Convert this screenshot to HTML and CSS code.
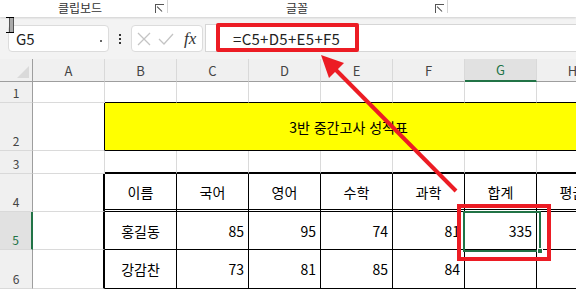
FILE: index.html
```html
<!DOCTYPE html>
<html lang="ko">

<head>
    <meta charset="UTF-8">
    <meta name="viewport" content="width=device-width, initial-scale=1.0">
    <title>성적표</title>
    <link rel="stylesheet" href="styles.css">
</head>

<body>
    <div id="app">
        <!-- 리본 그룹 이름 -->
        <div class="ribbon">
            <div class="group g-clip">
                <span class="label">클립보드</span>
                <i class="launch"></i>
            </div>
            <div class="group g-font">
                <span class="label">글꼴</span>
                <i class="launch"></i>
            </div>
        </div>

        <!-- 수식 입력줄 -->
        <div class="fbar">
            <div class="namebox">
                <span>G5</span>
                <i class="dot"></i>
            </div>
            <div class="vdots"><i></i><i></i><i></i></div>
            <div class="fxbox">
                <svg width="16" height="16" viewBox="0 0 16 16"><path d="M2 2 L14 14 M14 2 L2 14" stroke="#c4c4c4" stroke-width="1.3" fill="none"/></svg>
                <svg width="18" height="16" viewBox="0 0 18 16"><path d="M2 8 L7 13 L16 3" stroke="#c4c4c4" stroke-width="1.3" fill="none"/></svg>
                <span class="fx">fx</span>
            </div>
            <div class="finput">
                <span class="formula">=C5+D5+E5+F5</span>
            </div>
        </div>

        <!-- 시트 -->
        <div class="sheet">
            <div class="hd corner"></div>
            <div class="hd col">A</div>
            <div class="hd col">B</div>
            <div class="hd col">C</div>
            <div class="hd col">D</div>
            <div class="hd col">E</div>
            <div class="hd col">F</div>
            <div class="hd col on">G</div>
            <div class="hd col">H</div>

            <div class="hd row">1</div>
            <div class="c"></div>
            <div class="c b-bot"></div>
            <div class="c b-bot"></div>
            <div class="c b-bot"></div>
            <div class="c b-bot"></div>
            <div class="c b-bot"></div>
            <div class="c b-bot"></div>
            <div class="c b-bot"></div>

            <div class="hd row">2</div>
            <div class="c b-right"></div>
            <div class="c title">3반 중간고사 성적표</div>

            <div class="hd row">3</div>
            <div class="c"></div>
            <div class="c top"></div>
            <div class="c top"></div>
            <div class="c top"></div>
            <div class="c top"></div>
            <div class="c top"></div>
            <div class="c top"></div>
            <div class="c top"></div>

            <div class="hd row">4</div>
            <div class="c edge"></div>
            <div class="c t th">이름</div>
            <div class="c t th">국어</div>
            <div class="c t th">영어</div>
            <div class="c t th">수학</div>
            <div class="c t th">과학</div>
            <div class="c t th">합계</div>
            <div class="c t th">평균</div>

            <div class="hd row on">5</div>
            <div class="c edge"></div>
            <div class="c t mid">홍길동</div>
            <div class="c t num">85</div>
            <div class="c t num">95</div>
            <div class="c t num">74</div>
            <div class="c t num">81</div>
            <div class="c t num">335</div>
            <div class="c t"></div>

            <div class="hd row">6</div>
            <div class="c edge"></div>
            <div class="c t mid">강감찬</div>
            <div class="c t num">73</div>
            <div class="c t num">81</div>
            <div class="c t num">85</div>
            <div class="c t num">84</div>
            <div class="c t"></div>
            <div class="c t"></div>
        </div>

        <!-- 표시 (위에 겹치는 것) -->
        <i class="ibeam"></i>
        <div class="mark mark-formula"></div>
        <div class="mark mark-cell"></div>
        <div class="sel"><i></i></div>
        <svg class="arrow" width="576" height="289" viewBox="0 0 576 289">
            <line x1="456" y1="191" x2="334" y2="68" stroke="#ec1c24" stroke-width="4"/>
            <polygon points="321,55 344,63 329,78" fill="#ec1c24"/>
        </svg>
    </div>
</body>

</html>
```

FILE: styles.css
```css
* {
    padding: 0;
    margin: 0;
    box-sizing: border-box;
}

body {
    width: 576px;
    height: 289px;
    overflow: hidden;
    background-color: #f3f3f3;
    font-family: "Noto Sans CJK KR", "Noto Sans", sans-serif;
    color: #000;
}

#app {
    position: relative;
    width: 576px;
    height: 289px;
    overflow: hidden;
}

/* 리본 */
.ribbon {
    height: 17px;
    background-color: #fff;
    display: flex;
    box-shadow: 0 1px 2px rgba(0, 0, 0, 0.15);
    position: relative;
}

.ribbon .group {
    height: 13px;
    display: flex;
    align-items: center;
    border-right: 1px solid #d6d6d6;
    position: relative;
}

.g-clip {
    width: 168px;
}

.g-font {
    width: 280px;
}

.ribbon .label {
    font-size: 12px;
    line-height: 12px;
    color: #333;
    margin-top: 3px;
}

.g-clip .label {
    margin-left: 58px;
}

.g-font .label {
    margin-left: 118px;
}

.launch {
    position: absolute;
    right: 3px;
    top: 4px;
    width: 9px;
    height: 9px;
    border-left: 1px solid #555;
    border-top: 1px solid #555;
}

.launch::after {
    content: "";
    position: absolute;
    left: 1px;
    top: 1px;
    width: 7px;
    height: 1.3px;
    background-color: #444;
    transform-origin: left center;
    transform: rotate(45deg);
}

/* 수식 입력줄 */
.fbar {
    height: 42px;
    display: flex;
    align-items: flex-start;
    padding-top: 8px;
}

.namebox {
    width: 101px;
    height: 27px;
    margin-left: 8px;
    background-color: #fff;
    border: 1px solid #dcdcdc;
    border-radius: 4px;
    display: flex;
    align-items: center;
    padding-left: 7px;
    font-size: 15px;
    color: #222;
    position: relative;
}

.namebox .dot {
    position: absolute;
    right: 6px;
    top: 14px;
    width: 2px;
    height: 2px;
    background-color: #666;
}

.vdots {
    width: 22px;
    height: 27px;
    display: flex;
    flex-direction: column;
    align-items: center;
    justify-content: center;
    gap: 2px;
}

.vdots i {
    width: 2px;
    height: 2px;
    background-color: #333;
}

.fxbox {
    width: 72px;
    height: 27px;
    background-color: #fff;
    border: 1px solid #dcdcdc;
    border-radius: 4px;
    display: flex;
    align-items: center;
    padding-left: 4px;
    gap: 5px;
}

.fx {
    font-family: "Liberation Serif", serif;
    font-style: italic;
    font-size: 17px;
    color: #333;
    margin-left: 4px;
}

.finput {
    flex: 1;
    height: 28px;
    margin-left: 2px;
    margin-top: -1px;
    background-color: #fff;
    border-top: 1px solid #d6d6d6;
    border-bottom: 1px solid #d6d6d6;
    border-left: 1px solid #d6d6d6;
    display: flex;
    align-items: center;
    padding-left: 27px;
}

.formula {
    font-size: 15px;
    color: #222;
    letter-spacing: 0.3px;
}

/* 시트 */
.sheet {
    margin-top: 0;
    width: 609px;
    display: grid;
    grid-template-columns: 33px repeat(8, 72px);
    grid-template-rows: 23px 21px 48px 23px 38px 38px 39px;
    background-color: #fff;
}

.hd {
    background-color: #f0f0f0;
    color: #444;
    display: flex;
    justify-content: center;
}

.hd.col {
    align-items: center;
    font-size: 13px;
    border-right: 1px solid #d9d9d9;
    border-bottom: 1px solid #9e9e9e;
}

.hd.col.on {
    background-color: #e1e1e1;
    border-bottom: 2px solid #217346;
    color: #217346;
}

.hd.corner {
    border-right: 1px solid #9e9e9e;
    border-bottom: 1px solid #9e9e9e;
    position: relative;
}

.hd.corner::after {
    content: "";
    position: absolute;
    right: 3px;
    bottom: 3px;
    border-left: 12px solid transparent;
    border-bottom: 12px solid #dadada;
}

.hd.row {
    align-items: flex-end;
    padding-bottom: 1px;
    font-size: 12px;
    border-right: 1px solid #9e9e9e;
    border-bottom: 1px solid #d9d9d9;
}

.hd.row.on {
    background-color: #e1e1e1;
    border-right: 2px solid #217346;
    color: #217346;
}

.c {
    border-right: 1px solid #dadada;
    border-bottom: 1px solid #dadada;
    font-size: 14px;
    display: flex;
    align-items: center;
}

.c.b-bot {
    border-bottom-color: #000;
}

.c.b-right {
    border-right-color: #000;
}

.title {
    grid-column: 3 / -1;
    background-color: #ffff00;
    border-right: 0;
    border-bottom: 1px solid #000;
    justify-content: center;
    padding-right: 17px;
}

.c.top {
    border-bottom: 2px solid #000;
}

.c.edge {
    border-right: 2px solid #000;
}

.c.t {
    border-right: 1px solid #000;
    border-bottom: 1px solid #000;
}

.c.th {
    justify-content: center;
    border-bottom: 3px double #000;
}

.c.mid {
    justify-content: center;
}

.c.num {
    justify-content: flex-end;
    padding-right: 4px;
}

/* 겹치는 표시 */
.ibeam {
    position: absolute;
    left: 6px;
    top: 17px;
    width: 8px;
    height: 16px;
    border-top: 1px solid #000;
    border-bottom: 1px solid #000;
}

.ibeam::after {
    content: "";
    position: absolute;
    left: 3px;
    top: 0;
    width: 3px;
    height: 14px;
    background-color: #aaa;
    border-left: 1px solid #555;
    border-right: 1px solid #555;
}

.mark {
    position: absolute;
    border: 4px solid #ec1c24;
}

.mark-formula {
    left: 216px;
    top: 23px;
    width: 143px;
    height: 29px;
    border-radius: 2px;
}

.mark-cell {
    left: 457px;
    top: 204px;
    width: 94px;
    height: 57px;
}

.sel {
    position: absolute;
    left: 463px;
    top: 211px;
    width: 78px;
    height: 41px;
    border: 2px solid #217346;
}

.sel i {
    position: absolute;
    right: -4px;
    bottom: -4px;
    width: 6px;
    height: 6px;
    background-color: #217346;
    border: 1px solid #fff;
}

.arrow {
    position: absolute;
    left: 0;
    top: 0;
    pointer-events: none;
}
```
